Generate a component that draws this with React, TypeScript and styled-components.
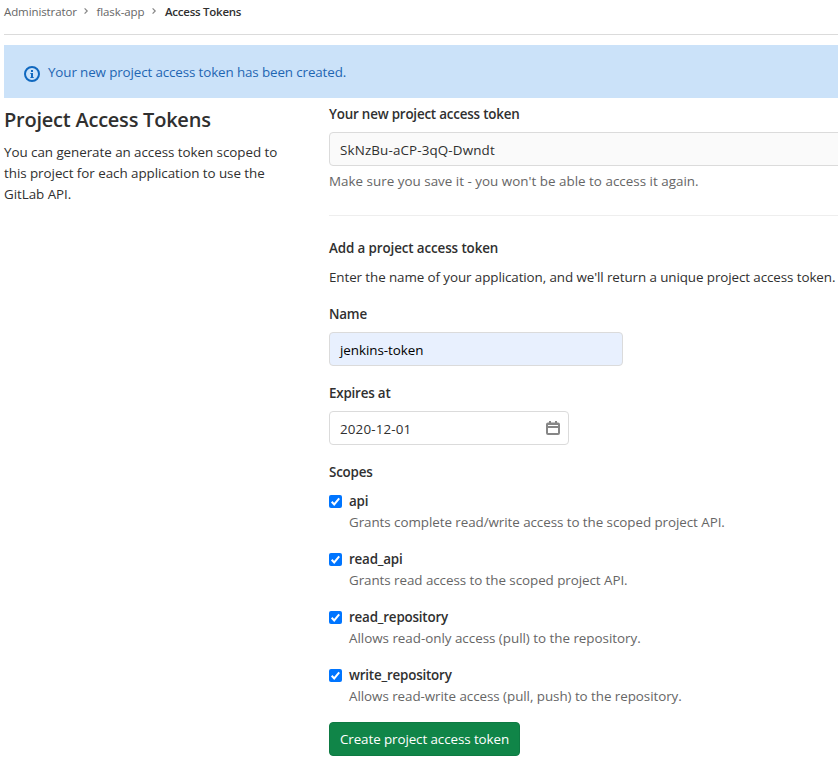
import React from "react";
import styled, { createGlobalStyle } from "styled-components";

const GlobalStyle = createGlobalStyle`
  *, *::before, *::after { box-sizing: border-box; }
  html, body { margin: 0; background: #fff; overflow: hidden; }
  body {
    color: #303030;
    font-family: "Open Sans", "Noto Sans", sans-serif;
    font-size: 13.4px;
    line-height: 21px;
  }
`;

const Page = styled.div`
  width: 838px;
  height: 764px;
  padding-left: 4px;
  overflow: hidden;
`;

const Breadcrumbs = styled.nav`
  display: flex;
  align-items: center;
  height: 35px;
  padding-bottom: 11px;
  border-bottom: 1px solid #dbdbdb;
  font-size: 11.5px;
  line-height: 16px;
`;

const Crumb = styled.span<{ $current?: boolean; $width: number }>`
  width: ${(p) => p.$width}px;
  color: ${(p) => (p.$current ? "#303030" : "#666")};
  font-weight: ${(p) => (p.$current ? 550 : 400)};
  letter-spacing: ${(p) => (p.$current ? "-0.25px" : "-0.1px")};
  white-space: nowrap;
`;

const Chevron = styled.svg`
  width: 8px;
  height: 8px;
  margin: 0 7px 1px 4.5px;
  fill: none;
  stroke: #868686;
  stroke-width: 1.2;
`;

const Alert = styled.div`
  display: flex;
  align-items: center;
  height: 53px;
  margin-top: 10px;
  padding-left: 20px;
  background: #cbe2f9;
  color: #1f66b3;
`;

const AlertIcon = styled.svg`
  width: 16px;
  height: 16px;
  margin: 4px 8px 0 0;
  fill: #1068bf;
`;

const AlertText = styled.span`
  padding-top: 2px;
  letter-spacing: -0.125px;
`;

const Columns = styled.div`
  display: grid;
  grid-template-columns: 325px 1fr;
`;

const Title = styled.h1`
  margin: 8px 0 9px;
  font-size: 20px;
  font-weight: 550;
  line-height: 27px;
  letter-spacing: -0.23px;
  white-space: nowrap;
`;

const Intro = styled.p`
  width: 290px;
  margin: 0;
  letter-spacing: -0.05px;
`;

const Main = styled.main`
  padding-top: 6px;
  white-space: nowrap;
`;

const Label = styled.label<{ $spacing?: number }>`
  display: block;
  font-weight: 550;
  letter-spacing: ${(p) => p.$spacing ?? -0.2}px;
`;

const Text = styled.p<{ $muted?: boolean; $spacing?: number }>`
  margin: 0;
  color: ${(p) => (p.$muted ? "#666" : "#303030")};
  letter-spacing: ${(p) => p.$spacing ?? 0}px;
`;

const TokenBlock = styled.section`
  height: 112px;
  border-bottom: 1px solid #eee;
`;

const FormBlock = styled.form`
  padding-top: 22px;

  > ${Text} { margin: 8px 0 16px; }
`;

const Field = styled.div`
  margin-bottom: 17px;
`;

const Control = styled.div<{ $width?: number; $fill?: string; $spacing?: number }>`
  display: flex;
  align-items: center;
  justify-content: space-between;
  width: ${(p) => (p.$width ? `${p.$width}px` : "530px")};
  height: 34px;
  margin: 7px 0 5px;
  padding: 2px 8px 0 10px;
  border: 1px solid #dbdbdb;
  border-radius: 4px;
  background: ${(p) => p.$fill ?? "#fff"};
  letter-spacing: ${(p) => p.$spacing ?? 0}px;
`;

const FieldControl = styled(Control)`
  margin-bottom: 0;
`;

const NameControl = styled(FieldControl)`
  color: #000;
`;

const CalendarIcon = styled.svg`
  width: 14px;
  height: 14px;
  margin-bottom: 2px;
`;

const Scope = styled.div`
  display: grid;
  grid-template-columns: 20px 1fr;
  margin: 8px 0 16px;
`;

const Checkbox = styled.svg`
  width: 13px;
  height: 13px;
  margin-top: 4px;
`;

const Submit = styled.button`
  display: block;
  width: 191px;
  height: 34px;
  margin-top: -1px;
  padding: 0;
  border: 1px solid #0e7a43;
  border-radius: 4px;
  background: #108548;
  color: #fff;
  font: 500 13.4px/20px "Open Sans", "Noto Sans", sans-serif;
  letter-spacing: -0.09px;
`;

const scopes = [
  { name: "api", help: "Grants complete read/write access to the scoped project API.", spacing: -0.06 },
  { name: "read_api", help: "Grants read access to the scoped project API.", spacing: -0.06 },
  { name: "read_repository", help: "Allows read-only access (pull) to the repository.", spacing: -0.02 },
  { name: "write_repository", help: "Allows read-write access (pull, push) to the repository.", spacing: -0.055 },
];

const Separator = () => (
  <Chevron viewBox="0 0 8 8">
    <path d="M2.600 1.400l2.600 2.600-2.600 2.600" />
  </Chevron>
);

export default function App() {
  return (
    <Page>
      <GlobalStyle />
      <Breadcrumbs>
        <Crumb $width={73}>Administrator</Crumb>
        <Separator />
        <Crumb $width={49}>flask-app</Crumb>
        <Separator />
        <Crumb $width={80} $current>Access Tokens</Crumb>
      </Breadcrumbs>
      <Alert>
        <AlertIcon viewBox="0 0 16 16">
          <path fillRule="evenodd" d="M8 0a8 8 0 1 0 0 16A8 8 0 0 0 8 0zm0 2a6 6 0 1 1 0 12A6 6 0 0 1 8 2z" />
          <path d="M7 4h2v2H7zM6.400 7H9v4h.7v1H6.400v-1H7V8h-.6z" />
        </AlertIcon>
        <AlertText>Your new project access token has been created.</AlertText>
      </Alert>
      <Columns>
        <aside>
          <Title>Project Access Tokens</Title>
          <Intro>
            You can generate an access token scoped to this project for each application to use the GitLab API.
          </Intro>
        </aside>
        <Main>
          <TokenBlock>
            <Label>Your new project access token</Label>
            <Control $fill="#fafafa" $spacing={0.14}>SkNzBu-aCP-3qQ-Dwndt</Control>
            <Text $muted $spacing={0.015}>Make sure you save it - you won't be able to access it again.</Text>
          </TokenBlock>
          <FormBlock>
            <Label $spacing={-0.11}>Add a project access token</Label>
            <Text $spacing={-0.09}>
              Enter the name of your application, and we'll return a unique project access token.
            </Text>
            <Field>
              <Label>Name</Label>
              <NameControl $width={294} $fill="#e8f0fe" $spacing={-0.05}>jenkins-token</NameControl>
            </Field>
            <Field>
              <Label>Expires at</Label>
              <FieldControl $width={240} $spacing={0.15}>
                2020-12-01
                <CalendarIcon viewBox="0 0 14 14">
                  <path
                    fill="#868686"
                    fillRule="evenodd"
                    d="M3 0h2v1.500h4V0h2v1.500h1a2 2 0 0 1 2 2V12a2 2 0 0 1-2 2H2a2 2 0 0 1-2-2V3.500a2 2 0 0 1 2-2h1zM2 4v1h10V4zM2 7v5h10V7z"
                  />
                </CalendarIcon>
              </FieldControl>
            </Field>
            <Label>Scopes</Label>
            {scopes.map((scope) => (
              <Scope key={scope.name}>
                <Checkbox viewBox="0 0 13 13">
                  <rect width="13" height="13" rx="2" fill="#0075ff" />
                  <path d="M2.700 6.800l2.500 2.600 5-6" fill="none" stroke="#fff" strokeWidth="2" />
                </Checkbox>
                <div>
                  <Label>{scope.name}</Label>
                  <Text $muted $spacing={scope.spacing}>{scope.help}</Text>
                </div>
              </Scope>
            ))}
            <Submit type="button">Create project access token</Submit>
          </FormBlock>
        </Main>
      </Columns>
    </Page>
  );
}
